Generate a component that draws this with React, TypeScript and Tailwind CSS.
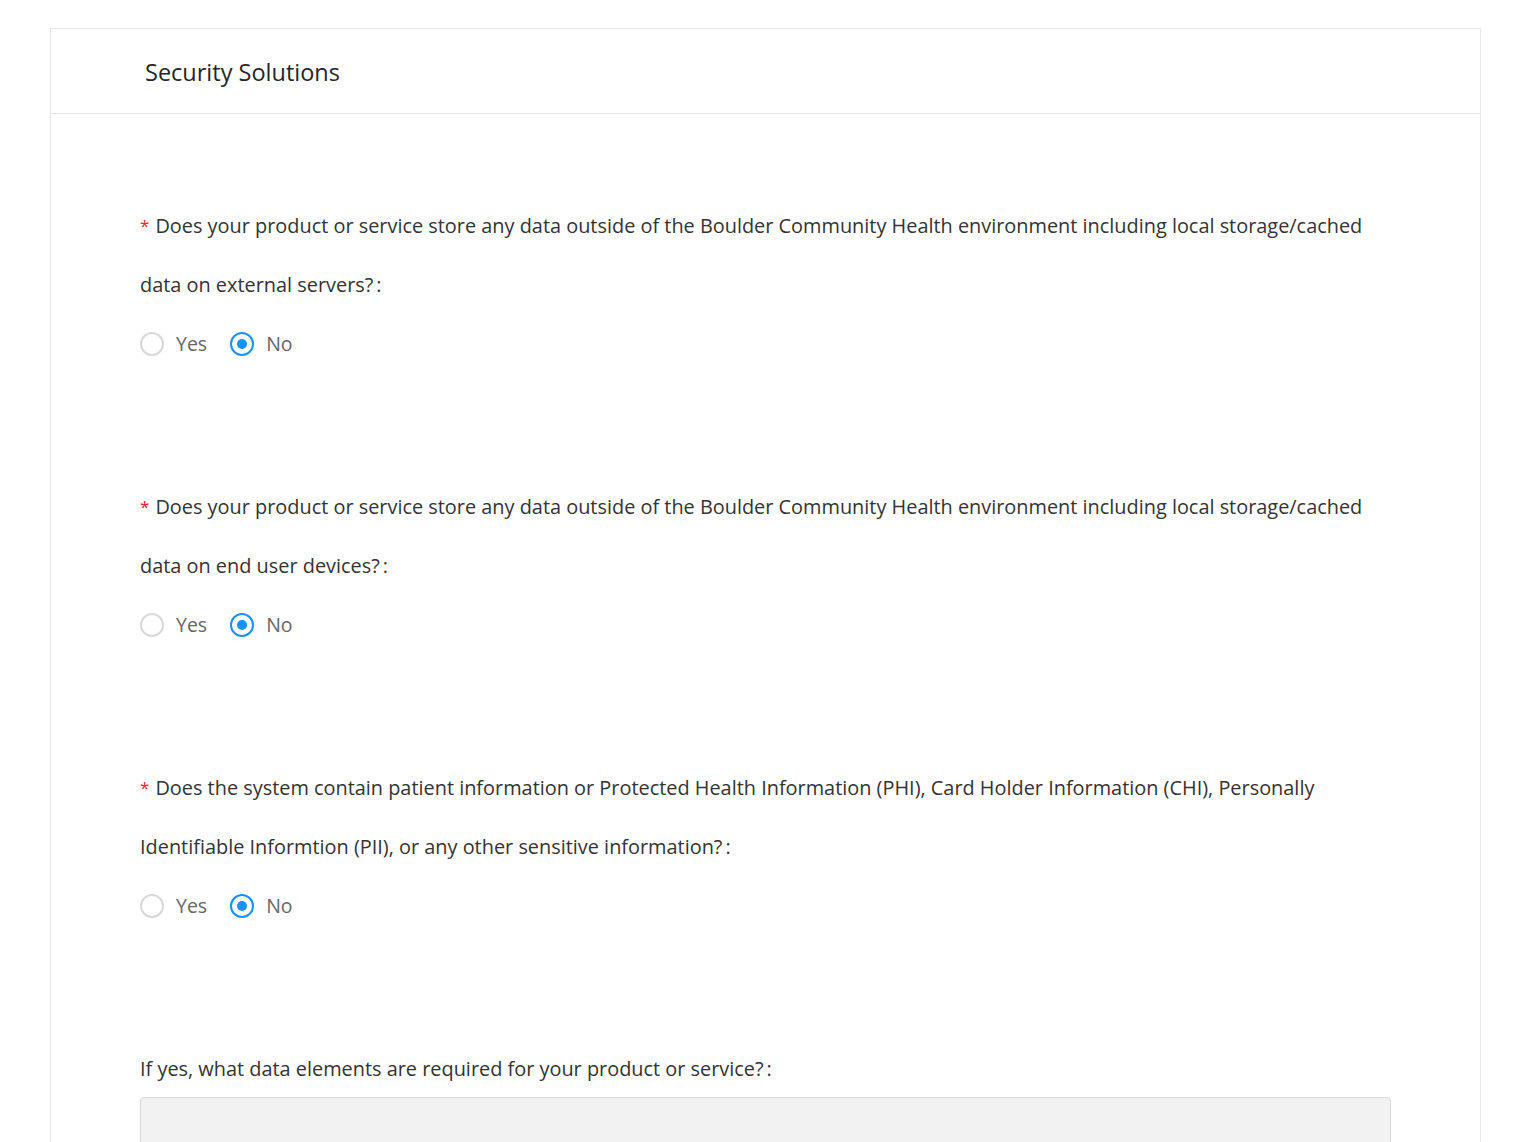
import React from "react";

type Question = {
  id: string;
  lines: [string, string];
  value: "yes" | "no";
};

const questions: Question[] = [
  {
    id: "external",
    lines: [
      "Does your product or service store any data outside of the Boulder Community Health environment including local storage/cached",
      "data on external servers?",
    ],
    value: "no",
  },
  {
    id: "devices",
    lines: [
      "Does your product or service store any data outside of the Boulder Community Health environment including local storage/cached",
      "data on end user devices?",
    ],
    value: "no",
  },
  {
    id: "phi",
    lines: [
      "Does the system contain patient information or Protected Health Information (PHI), Card Holder Information (CHI), Personally",
      "Identifiable Informtion (PII), or any other sensitive information?",
    ],
    value: "no",
  },
];

function Radio({ checked, label }: { checked: boolean; label: string }) {
  return (
    <label className="inline-flex items-center cursor-pointer">
      <span
        className={`w-6 h-6 rounded-full border-2 bg-white flex items-center justify-center shrink-0 ${
          checked ? "border-[#1890ff]" : "border-[#d9d9d9]"
        }`}
      >
        {checked && <span className="w-[10px] h-[10px] rounded-full bg-[#1890ff]" />}
      </span>
      <span className="pl-3 pr-[23px] text-[#666] text-[19.5px]">{label}</span>
    </label>
  );
}

function YesNo({ q }: { q: Question }) {
  return (
    <div className="mb-[104px]">
      <div className="text-[#333]">
        <span className="text-[#f5222d] pr-[6px] text-[17px] align-top">*</span>
        {q.lines[0]}
        <br />
        {q.lines[1]}
        <span className="ml-[3px]">:</span>
      </div>
      <div className="flex items-center h-[59px]">
        <Radio checked={q.value === "yes"} label="Yes" />
        <Radio checked={q.value === "no"} label="No" />
      </div>
    </div>
  );
}

export default function App() {
  return (
    <div
      className="min-h-screen bg-white pt-7 px-[50px]"
      style={{ fontFamily: '"Open Sans", "Noto Sans", sans-serif' }}
    >
      <div className="w-[1431px] border border-[#e8e8e8] border-b-0 bg-white">
        {/* Header */}
        <div className="h-[85px] flex items-center pl-[94px] pt-[3px] border-b border-[#e8e8e8]">
          <h2 className="text-[23.5px] font-medium text-[#262626]">Security Solutions</h2>
        </div>

        {/* Body */}
        <div className="pl-[89px] pr-[89px] pt-[82px] pb-10 text-[19.9px] leading-[59px]">
          {questions.map((q) => (
            <YesNo key={q.id} q={q} />
          ))}

          <div className="text-[#333] h-[58px]">
            If yes, what data elements are required for your product or service?
            <span className="ml-[3px]">:</span>
          </div>
          <textarea
            className="block w-full h-[120px] rounded border border-[#d9d9d9] bg-[#f2f2f2] resize-none outline-none"
            disabled
          />
        </div>
      </div>
    </div>
  );
}
